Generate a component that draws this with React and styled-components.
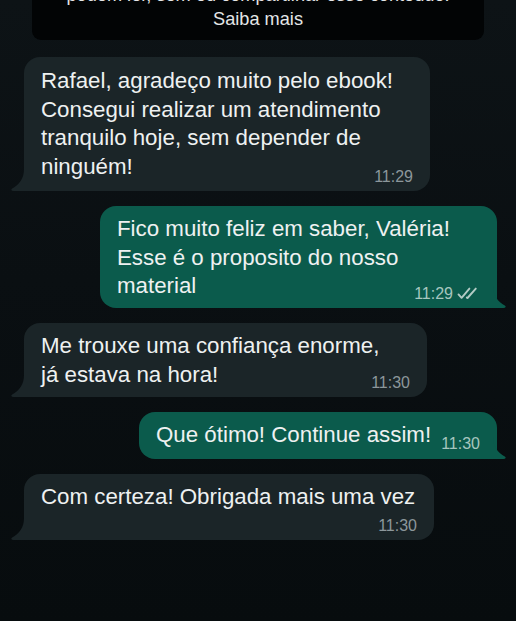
import React from 'react';
import styled, { createGlobalStyle } from 'styled-components';

const GlobalStyle = createGlobalStyle`
  html, body {
    margin: 0;
    padding: 0;
    background: #090e11;
    overflow: hidden;
  }
  body {
    font-family: "Liberation Sans", Arial, sans-serif;
    -webkit-font-smoothing: antialiased;
  }
`;

const Screen = styled.div`
  width: 516px;
  height: 621px;
  overflow: hidden;
  background: linear-gradient(180deg, #0d1316 0%, #0a0f12 45%, #070c0e 100%);
`;

const Thread = styled.div`
  display: flex;
  flex-direction: column;
  gap: 15px;
`;

const Notice = styled.div`
  margin: -28px 32px 2px 32px;
  padding: 12px 16px 10px;
  background: #020405;
  border-radius: 9px;
  color: #e4e6e7;
  font-size: 18.2px;
  line-height: 22px;
  text-align: center;
  white-space: nowrap;
`;

const NoticeLine = styled.div`
  margin-bottom: ${p => p.$mb || 0}px;
`;

const Bubble = styled.div`
  position: relative;
  width: ${p => p.$w}px;
  box-sizing: border-box;
  align-self: ${p => (p.$out ? 'flex-end' : 'flex-start')};
  margin: ${p => (p.$out ? '0 19px 0 0' : '0 0 0 24px')};
  padding: ${p => p.$pt || 9}px 17px ${p => (p.$row ? 9 : 5)}px 17px;
  background: ${p => (p.$out ? '#0b5b4c' : '#1b2528')};
  border-radius: 16px;
  border-bottom-left-radius: ${p => (p.$out ? 16 : 4)}px;
  border-bottom-right-radius: ${p => (p.$out ? 4 : 16)}px;
  color: #eef1f1;
`;

const Content = styled.div`
  display: ${p => (p.$row ? 'flex' : 'block')};
  align-items: flex-end;
  gap: 10px;
`;

const Body = styled.div`
  font-size: 22.3px;
  line-height: 28.7px;
  white-space: nowrap;
`;

const Line = styled.div`
  width: fit-content;
`;

const Meta = styled.div`
  display: flex;
  width: fit-content;
  margin-left: auto;
  align-items: center;
  gap: 4px;
  height: 18px;
  margin-top: ${p => p.$mt}px;
  margin-bottom: ${p => (p.$row ? -3 : 0)}px;
  font-size: 16px;
  line-height: 18px;
  color: ${p => (p.$out ? '#a6c6bf' : '#8c979b')};
`;

const Tail = styled.svg`
  position: absolute;
  bottom: 0;
  width: 24px;
  height: 22px;
  ${p => (p.$out ? 'right: -10px; transform: scaleX(-1);' : 'left: -14px;')}
  fill: ${p => (p.$out ? '#0b5b4c' : '#1b2528')};
`;

const Ticks = () => (
  <svg width="23" height="13" viewBox="0 0 23 13" fill="none" stroke="#b3cbc5" strokeWidth="1.9" strokeLinecap="round" strokeLinejoin="round">
    <path d="M1.5 7.4 L4.6 10.8 L12.4 1.6" />
    <path d="M9.8 10.6 L10.5 11 L18.8 1.6" />
  </svg>
);

const Message = ({ out, w, lines, time, row, mt = -15, pt, read }) => (
  <Bubble $out={out} $w={w} $row={row} $pt={pt}>
    <Tail $out={out} viewBox="0 0 24 22">
      <path d="M14 0 L24 0 L24 22 L3.5 22 C1.2 22 0.6 20.6 2.2 19.6 C9 15.6 14 10 14 0 Z" />
    </Tail>
    <Content $row={row}>
      <Body>
        {lines.map(l => (
          <Line key={l}>{l}</Line>
        ))}
      </Body>
      <Meta $out={out} $mt={row ? 0 : mt} $row={row}>
        <span>{time}</span>
        {read && <Ticks />}
      </Meta>
    </Content>
  </Bubble>
);

export default function App() {
  return (
    <Screen>
      <GlobalStyle />
      <Thread>
        <Notice>
          <NoticeLine $mb={2}>podem ler, sem eu compartilhar esse conteúdo.</NoticeLine>
          <NoticeLine>Saiba mais</NoticeLine>
        </Notice>
        <Message
          w={406}
          pt={10}
          lines={[
            'Rafael, agradeço muito pelo ebook!',
            'Consegui realizar um atendimento',
            'tranquilo hoje, sem depender de',
            'ninguém!',
          ]}
          time="11:29"
          mt={-14}
        />
        <Message
          out
          read
          w={397}
          lines={['Fico muito feliz em saber, Valéria!', 'Esse é o proposito do nosso', 'material']}
          time="11:29"
          mt={-16}
        />
        <Message w={403} lines={['Me trouxe uma confiança enorme,', 'já estava na hora!']} time="11:30" />
        <Message out row w={358} lines={['Que ótimo! Continue assim!']} time="11:30" />
        <Message w={410} lines={['Com certeza! Obrigada mais uma vez']} time="11:30" mt={5.5} />
      </Thread>
    </Screen>
  );
}
